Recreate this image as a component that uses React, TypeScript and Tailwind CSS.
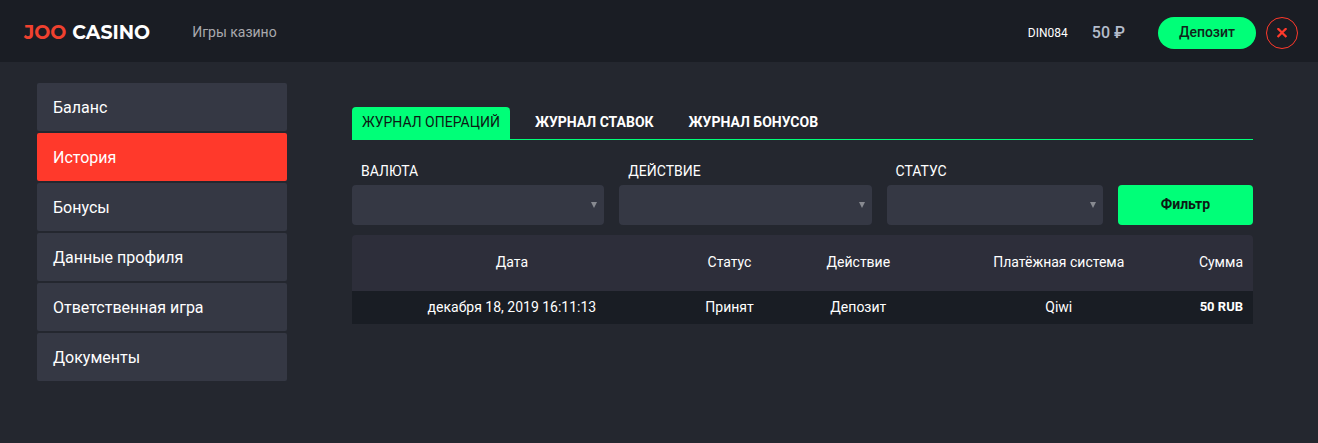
import { useState } from 'react';

interface Operation {
  id: number;
  date: string;
  status: string;
  action: string;
  system: string;
  amount: string;
}

const menuItems = ['Баланс', 'История', 'Бонусы', 'Данные профиля', 'Ответственная игра', 'Документы'];
const tabs = ['Журнал операций', 'Журнал ставок', 'Журнал бонусов'];
const filters = [
  { id: 'currency', label: 'Валюта' },
  { id: 'action', label: 'Действие' },
  { id: 'status', label: 'Статус' },
];
const operations: Operation[] = [
  { id: 1, date: 'декабря 18, 2019 16:11:13', status: 'Принят', action: 'Депозит', system: 'Qiwi', amount: '50 RUB' },
];

function Header() {
  return (
    <header className="flex h-[62px] items-center bg-[#1a1d24] pt-1 pr-5 pl-6">
      <a
        href="#"
        className="flex gap-1.5 text-[19px] leading-6 font-bold text-white font-[Montserrat,Lato,sans-serif]"
      >
        <span className="text-[#f0412f]">JOO</span>
        <span>CASINO</span>
      </a>
      <nav className="ml-[42px] pb-0.5">
        <a href="#" className="text-sm text-[#a9a9ad]">Игры казино</a>
      </nav>
      <div className="ml-auto flex items-center">
        <span className="text-xs">DIN084</span>
        <span className="ml-6 text-base font-medium text-[#b4bccb]">50 ₽</span>
        <button className="ml-[33px] h-8 rounded-full bg-[#00ff78] px-[21px] pb-0.5 text-sm font-medium text-[#10241b]">
          Депозит
        </button>
        <button
          aria-label="Выйти"
          className="ml-[10px] flex size-8 items-center justify-center rounded-full border border-[#ff392b] text-[#ff392b]"
        >
          <svg viewBox="0 0 10 10" className="size-[10px]" stroke="currentColor" strokeWidth="2.2">
            <path d="M0.6 0.2 9.4 9M9.4 0.2 0.6 9" />
          </svg>
        </button>
      </div>
    </header>
  );
}

export default function App() {
  const [activeItem, setActiveItem] = useState('История');
  const [activeTab, setActiveTab] = useState(tabs[0]);

  return (
    <div className="min-h-screen bg-[#24272f] text-white font-[Roboto,sans-serif]">
      <Header />

      <div className="flex gap-[65px] pt-[21px] pr-[65px] pl-[37px]">
        <nav className="flex w-[250px] shrink-0 flex-col gap-0.5">
          {menuItems.map(item => (
            <a
              key={item}
              href="#"
              onClick={() => setActiveItem(item)}
              className={`flex h-12 items-center rounded-xs px-4 pt-0.5 text-base ${
                item === activeItem ? 'bg-[#ff392b]' : 'bg-[#353844]'
              }`}
            >
              {item}
            </a>
          ))}
        </nav>

        <main className="min-w-0 flex-1 pt-6">
          <div className="flex gap-[15px] border-b border-[#00ff78]">
            {tabs.map(tab => (
              <button
                key={tab}
                onClick={() => setActiveTab(tab)}
                className={`h-8 rounded-t px-[10px] pb-0.5 text-sm uppercase ${
                  tab === activeTab ? 'bg-[#00ff78] text-[#0c1a14]' : 'font-bold'
                }`}
              >
                {tab}
              </button>
            ))}
          </div>

          <form
            className="mt-[21px] grid grid-cols-[28fr_28fr_24fr_15fr] items-end gap-[15px]"
            onSubmit={e => e.preventDefault()}
          >
            {filters.map(filter => (
              <div key={filter.id}>
                <label htmlFor={filter.id} className="block pb-1 pl-[9px] text-sm uppercase">
                  {filter.label}
                </label>
                <div className="relative">
                  <select id={filter.id} className="block h-10 w-full appearance-none rounded bg-[#353844] px-3 text-sm">
                    <option value=""></option>
                  </select>
                  <svg
                    viewBox="0 0 6 6"
                    className="pointer-events-none absolute top-[17px] right-[7px] size-[6px] fill-[#888a91]"
                  >
                    <path d="M0 0H6L3 6Z" />
                  </svg>
                </div>
              </div>
            ))}
            <button className="h-10 rounded bg-[#00ff78] pb-0.5 text-sm font-bold text-[#0c1a14]">Фильтр</button>
          </form>

          <table className="mt-[10px] w-full table-fixed text-center text-sm">
            <thead className="bg-[#2d2e3a]">
              <tr className="h-14">
                <th className="w-[35.5%] rounded-tl pb-0.5 font-normal">Дата</th>
                <th className="w-[12.8%] pb-0.5 font-normal">Статус</th>
                <th className="w-[15.8%] pb-0.5 font-normal">Действие</th>
                <th className="w-[28.7%] pb-0.5 font-normal">Платёжная система</th>
                <th className="rounded-tr pr-[10px] pb-0.5 text-right font-normal">Сумма</th>
              </tr>
            </thead>
            <tbody>
              {operations.map(op => (
                <tr key={op.id} className="h-[33px] bg-[#191d24]">
                  <td className="pb-0.5">{op.date}</td>
                  <td className="pb-0.5">{op.status}</td>
                  <td className="pb-0.5">{op.action}</td>
                  <td className="pb-0.5">{op.system}</td>
                  <td className="pr-[10px] text-right text-[13px] font-bold">{op.amount}</td>
                </tr>
              ))}
            </tbody>
          </table>
        </main>
      </div>
    </div>
  );
}
